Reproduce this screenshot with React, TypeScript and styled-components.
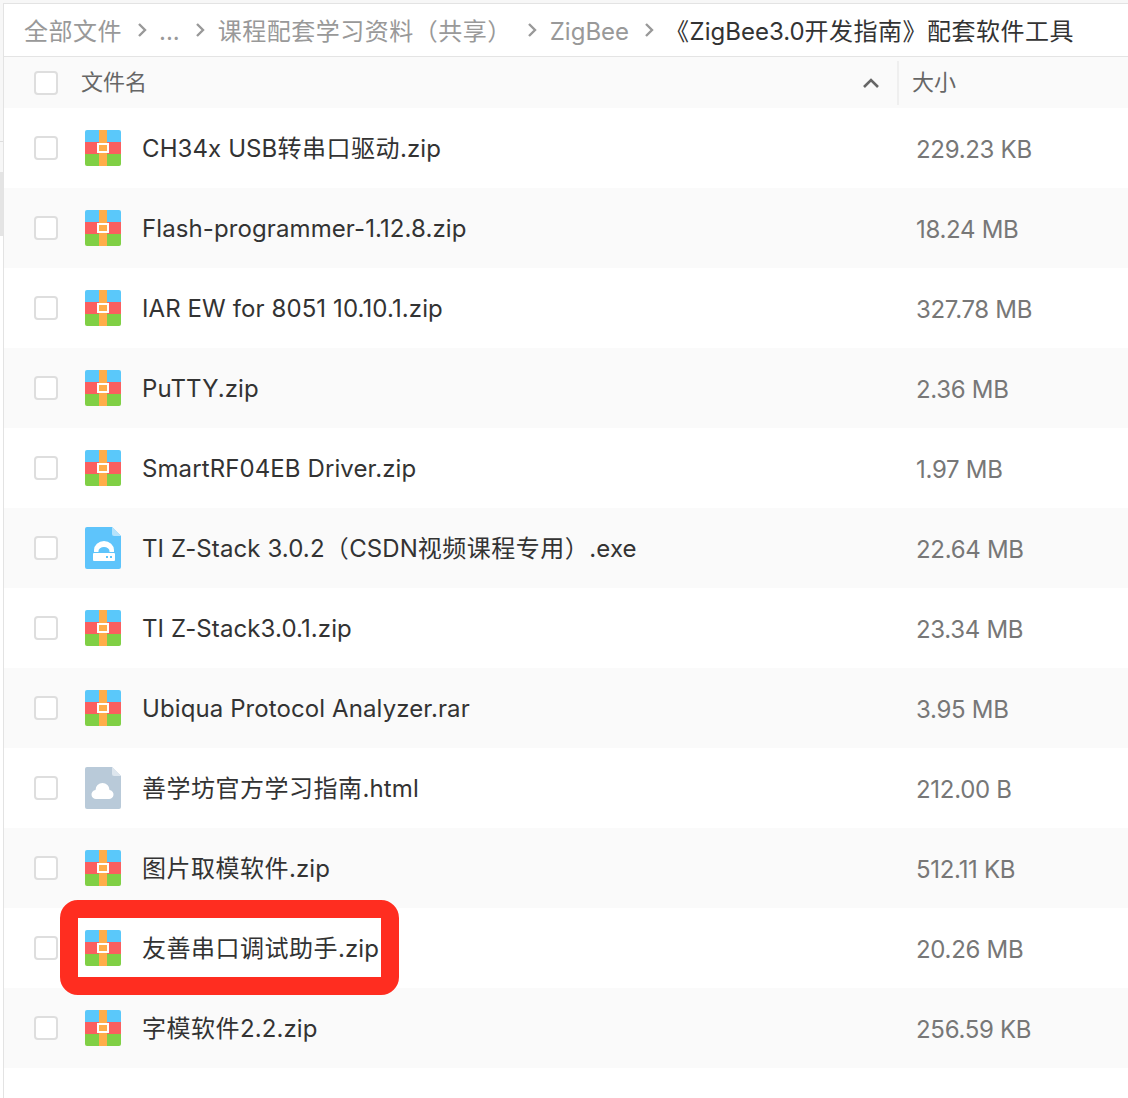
import React from 'react';
import styled, { createGlobalStyle } from 'styled-components';

const GlobalStyle = createGlobalStyle`
  html, body {
    margin: 0;
    padding: 0;
    background: #fff;
  }
`;

const Page = styled.div`
  position: relative;
  display: flex;
  width: 1128px;
  height: 1098px;
  overflow: hidden;
  background: #fff;
  font-family: Inter, "Noto Sans CJK SC", sans-serif;
`;

const Sidebar = styled.div`
  width: 3px;
  flex: none;
  display: flex;
  flex-direction: column;
`;

const SidebarItem = styled.div<{ $active?: boolean }>`
  height: ${p => (p.$active ? 64 : 30)}px;
  background: ${p => (p.$active ? '#e4e4e4' : '#f7f7f7')};
`;

const SidebarTop = styled.div`
  height: 141px;
  background: #f7f7f7;
  border-bottom: 1px solid #dedede;
`;

const Main = styled.div`
  flex: 1;
  display: flex;
  flex-direction: column;
`;

const TopStrip = styled.div`
  height: 3px;
  background: #f7f7f7;
`;

const Panel = styled.div`
  flex: 1;
  border-top: 1px solid #e3e3e3;
  border-left: 1px solid #e3e3e3;
  background: #fff;
`;

const Crumbs = styled.nav`
  display: flex;
  align-items: center;
  height: 53px;
  padding: 3px 0 0 20px;
  box-sizing: border-box;
  border-bottom: 1px solid #e4e4e4;
  font-size: 24px;
  line-height: 30px;
  white-space: nowrap;
`;

const Crumb = styled.span<{ $current?: boolean; $gap?: number }>`
  color: ${p => (p.$current ? '#333' : '#999')};
  margin-right: ${p => p.$gap ?? 0}px;
`;

const Chevron = styled.svg<{ $gap: number }>`
  width: 10px;
  height: 16px;
  margin: -3px ${p => p.$gap}px 0 0;
  flex: none;
`;

const HeaderRow = styled.div`
  display: flex;
  align-items: center;
  height: 51px;
  background: #fafafa;
`;

const Check = styled.span`
  display: block;
  width: 24px;
  height: 24px;
  box-sizing: border-box;
  border: 2px solid #dedede;
  border-radius: 4px;
  background: #fff;
  margin-left: 30px;
  flex: none;
`;

const HeaderName = styled.span`
  margin-left: 23px;
  width: 781px;
  font-size: 22px;
  line-height: 26px;
  padding-bottom: 2px;
  color: #666;
  flex: none;
`;

const SortArrow = styled.svg`
  width: 18px;
  height: 12px;
  flex: none;
  margin-right: 17px;
`;

const ColumnRule = styled.span`
  width: 2px;
  height: 44px;
  background: #efefef;
  flex: none;
`;

const HeaderSize = styled.span`
  margin-left: 13px;
  font-size: 22px;
  line-height: 26px;
  padding-bottom: 2px;
  color: #666;
`;

const Row = styled.div<{ $striped: boolean }>`
  display: flex;
  align-items: center;
  height: 80px;
  background: ${p => (p.$striped ? '#fafafa' : '#fff')};
`;

const IconSlot = styled.svg<{ $doc?: boolean }>`
  width: 36px;
  height: ${p => (p.$doc ? 42 : 36)}px;
  margin-left: 27px;
  flex: none;
`;

const FileName = styled.span`
  margin-left: 21px;
  width: 774px;
  flex: none;
  font-size: 24px;
  line-height: 30px;
  letter-spacing: 0.1px;
  color: #333;
  white-space: nowrap;
  padding-top: 2px;
`;

const Cjk = styled.span`
  letter-spacing: 0.5px;
`;

const FileSize = styled.span`
  font-size: 24px;
  line-height: 30px;
  letter-spacing: -0.3px;
  color: #777;
  white-space: nowrap;
  padding-top: 4px;
`;

const Highlight = styled.div`
  position: absolute;
  left: 60px;
  top: 900px;
  width: 339px;
  height: 95px;
  box-sizing: border-box;
  border: 18px solid #ff2d20;
  border-radius: 18px;
`;

const ZipIcon = () => (
  <IconSlot viewBox="0 0 36 36">
    <path d="M2 0h32a2 2 0 0 1 2 2v10H0V2a2 2 0 0 1 2-2z" fill="#5ac8fa" />
    <rect y="12" width="36" height="12" fill="#fb5f5f" />
    <path d="M0 24h36v10a2 2 0 0 1-2 2H2a2 2 0 0 1-2-2z" fill="#80cf45" />
    <rect x="14" width="8" height="36" fill="#ffad4a" />
    <rect x="13" y="14" width="10" height="8" fill="#ffad4a" stroke="#fff" strokeWidth="2" />
  </IconSlot>
);

const ExeIcon = () => (
  <IconSlot $doc viewBox="0 0 36 42">
    <path d="M2 0h25l9 9v31a2 2 0 0 1-2 2H2a2 2 0 0 1-2-2V2a2 2 0 0 1 2-2z" fill="#5ec4fb" />
    <path d="M27 0l9 9h-7a2 2 0 0 1-2-2z" fill="#b5e3fc" />
    <path d="M9 25v-2a10 9 0 0 1 20 0v2h-4.500v-1a5.500 4 0 0 0-11 0v1z" fill="#fff" />
    <rect x="8" y="26" width="22" height="8" rx="1" fill="#fff" />
    <rect x="21" y="29" width="2" height="2" fill="#5ec4fb" />
    <rect x="25" y="29" width="2" height="2" fill="#5ec4fb" />
  </IconSlot>
);

const WebIcon = () => (
  <IconSlot $doc viewBox="0 0 36 42">
    <path d="M2 0h25l9 9v31a2 2 0 0 1-2 2H2a2 2 0 0 1-2-2V2a2 2 0 0 1 2-2z" fill="#b9cad9" />
    <path d="M27 0l9 9h-7a2 2 0 0 1-2-2z" fill="#dde6ee" />
    <path d="M11.500 32a4.500 4.500 0 0 1-1-9 7 7 0 0 1 14 0 4.500 4.500 0 0 1-1 9z" fill="#fff" />
  </IconSlot>
);

type FileKind = 'zip' | 'exe' | 'web';

const files: { name: string; size: string; kind: FileKind }[] = [
  { name: 'CH34x USB转串口驱动.zip', size: '229.23 KB', kind: 'zip' },
  { name: 'Flash-programmer-1.12.8.zip', size: '18.24 MB', kind: 'zip' },
  { name: 'IAR EW for 8051 10.10.1.zip', size: '327.78 MB', kind: 'zip' },
  { name: 'PuTTY.zip', size: '2.36 MB', kind: 'zip' },
  { name: 'SmartRF04EB Driver.zip', size: '1.97 MB', kind: 'zip' },
  { name: 'TI Z-Stack 3.0.2（CSDN视频课程专用）.exe', size: '22.64 MB', kind: 'exe' },
  { name: 'TI Z-Stack3.0.1.zip', size: '23.34 MB', kind: 'zip' },
  { name: 'Ubiqua Protocol Analyzer.rar', size: '3.95 MB', kind: 'zip' },
  { name: '善学坊官方学习指南.html', size: '212.00 B', kind: 'web' },
  { name: '图片取模软件.zip', size: '512.11 KB', kind: 'zip' },
  { name: '友善串口调试助手.zip', size: '20.26 MB', kind: 'zip' },
  { name: '字模软件2.2.zip', size: '256.59 KB', kind: 'zip' },
];

const icons = { zip: ZipIcon, exe: ExeIcon, web: WebIcon };

// mac CJK glyphs run a little wider than the fallback here
const Spaced = ({ text }: { text: string }) => (
  <>
    {text.split(/([^\x00-\x7f]+)/).map((part, i) =>
      i % 2 === 1 ? <Cjk key={i}>{part}</Cjk> : part,
    )}
  </>
);

const Arrow = ({ gap }: { gap: number }) => (
  <Chevron $gap={gap} viewBox="0 0 10 16">
    <path d="M2 2l6 6-6 6" fill="none" stroke="#999" strokeWidth="2.4" />
  </Chevron>
);

export default function App() {
  return (
    <Page>
      <GlobalStyle />
      <Sidebar>
        <SidebarTop />
        <SidebarItem />
        <SidebarItem $active />
      </Sidebar>
      <Main>
        <TopStrip />
        <Panel>
          <Crumbs>
            <Crumb $gap={15}><Spaced text="全部文件" /></Crumb>
            <Arrow gap={12} />
            <Crumb $gap={15}>...</Crumb>
            <Arrow gap={13} />
            <Crumb $gap={15}><Spaced text="课程配套学习资料（共享）" /></Crumb>
            <Arrow gap={13} />
            <Crumb $gap={15}>ZigBee</Crumb>
            <Arrow gap={11} />
            <Crumb $current><Spaced text="《ZigBee3.0开发指南》配套软件工具" /></Crumb>
          </Crumbs>
          <HeaderRow>
            <Check />
            <HeaderName>文件名</HeaderName>
            <SortArrow viewBox="0 0 18 12">
              <path d="M2 10l7-7 7 7" fill="none" stroke="#666" strokeWidth="2.6" />
            </SortArrow>
            <ColumnRule />
            <HeaderSize>大小</HeaderSize>
          </HeaderRow>
          {files.map((file, i) => {
            const Icon = icons[file.kind];
            return (
              <Row key={file.name} $striped={i % 2 === 1}>
                <Check />
                <Icon />
                <FileName><Spaced text={file.name} /></FileName>
                <FileSize>{file.size}</FileSize>
              </Row>
            );
          })}
        </Panel>
      </Main>
      <Highlight />
    </Page>
  );
}
